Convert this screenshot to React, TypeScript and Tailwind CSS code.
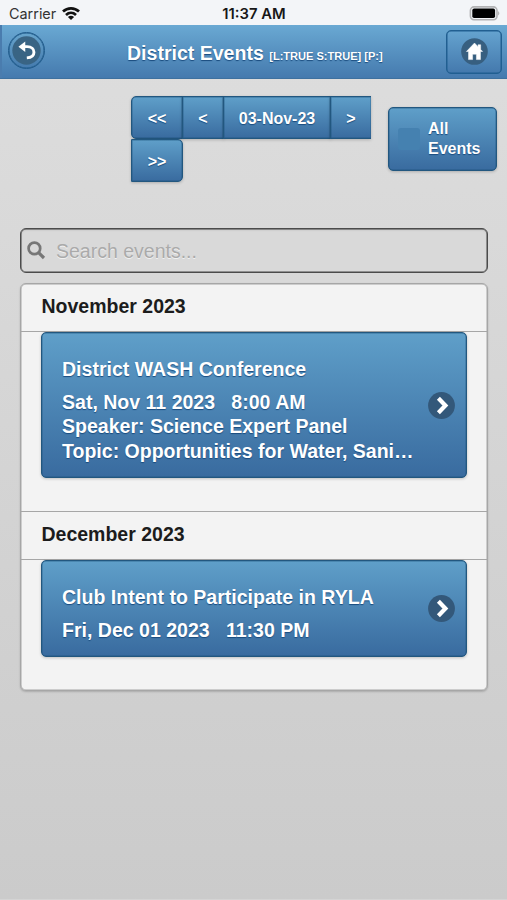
import type { ReactNode } from 'react';

const blue =
  'border border-[#22577f] bg-linear-to-b from-[#5f9fc9] to-[#396b9f] font-bold text-white [text-shadow:0_1px_1px_#194b7e] shadow-[inset_0_0_0_0.5px_rgba(28,80,122,0.6),0_1px_3px_rgba(0,0,0,0.2)]';

function Chevron() {
  return (
    <svg viewBox="0 0 27 27" className="h-[27px] w-[27px] shrink-0">
      <circle cx="13.5" cy="13.5" r="13.4" fill="#33587a" />
      <path d="M10.4 6.3 L17.4 13.5 L10.4 20.7" fill="none" stroke="#fff" strokeWidth="4.2" />
    </svg>
  );
}

function NavButton({ children, className }: { children: ReactNode; className: string }) {
  return (
    <button className={`${blue} flex h-[43px] items-center justify-center pt-[2px] text-[16px] ${className}`}>
      {children}
    </button>
  );
}

function EventCard({ title, lines, className }: { title: string; lines: string[]; className: string }) {
  return (
    <div className={`${blue} mx-[20px] flex items-center rounded-[5px] pr-[11px] pl-[20px] text-[19.55px] ${className}`}>
      <div className="w-[356px] min-w-0 pt-[10px]">
        <h3 className="mb-[9px] leading-[24px] whitespace-nowrap">{title}</h3>
        {lines.map((line) => (
          <p key={line} className="leading-[24.6px] whitespace-pre">{line}</p>
        ))}
      </div>
      <div className="ml-auto flex">
        <Chevron />
      </div>
    </div>
  );
}

function MonthHeading({ children, className }: { children: ReactNode; className: string }) {
  return (
    <h2 className={`flex items-center border-b border-[#a6a6a6] pb-[2px] pl-[20.5px] text-[19.5px] font-bold text-[#1c1c1c] ${className}`}>
      {children}
    </h2>
  );
}

export default function App() {
  return (
    <div className="flex h-[900px] w-[507px] flex-col overflow-hidden border-b border-[#d4d4d4] bg-linear-to-b from-[#dedede] to-[#cbcbcb] font-['Liberation_Sans',Arial,sans-serif]">
      <div className="grid h-[25px] shrink-0 grid-cols-3 items-center bg-[#f3f5f8] pt-[2px] font-[Inter,sans-serif] text-[#171717]">
        <div className="flex items-center gap-[6px] pl-[9px]">
          <span className="text-[14.4px] text-[#333]">Carrier</span>
          <svg viewBox="0 0 18 13" className="h-[13px] w-[18px]">
            <g fill="none" stroke="#111" strokeWidth="2.7">
              <path d="M1 4.6 C5.5 0.3 12.5 0.3 17 4.6" />
              <path d="M4 8 C7 5.2 11 5.2 14 8" />
            </g>
            <path d="M5.9 10 Q9 7.6 12.1 10 L9 13 Z" fill="#111" />
          </svg>
        </div>
        <span className="pt-px pl-px text-center text-[14.8px] font-semibold whitespace-nowrap">11:37 AM</span>
        <svg viewBox="0 0 32 15" className="mr-[6px] h-[15px] w-[32px] justify-self-end">
          <rect x="1.4" y="0.9" width="26.6" height="12.8" rx="3.6" fill="#f3f5f8" stroke="#b2b2b4" strokeWidth="1.6" />
          <rect x="3.3" y="2.6" width="22.8" height="9.4" rx="1.8" fill="#000" />
          <path d="M29.2 5 Q31.4 7.3 29.2 9.6 Z" fill="#aaa" />
        </svg>
      </div>

      <header className="flex h-[54px] shrink-0 items-center border-b border-[#3e719f] bg-linear-to-b from-[#6aa9d3] to-[#457aae] pr-[5px] text-white shadow-[inset_2px_0_0_#4a7cae]">
        <button className="-mt-[3px] ml-[8px] flex h-[37px] w-[37px] items-center justify-center rounded-full border border-[#215c8c] bg-linear-to-b from-[#68a5cd] to-[#457bae] shadow-[inset_0_0_0_0.5px_#215c8c]">
          <svg viewBox="0 0 28 28" className="h-[29px] w-[29px]">
            <circle cx="14" cy="14" r="13.7" fill="#396484" />
            <path d="M10.5 10.3 H14.5 C19 10.3 21.2 13 21.2 15.6 C21.2 18.7 18.5 20.8 14.3 21.1" fill="none" stroke="#fff" strokeWidth="2.8" />
            <path d="M12.8 5.3 V15.4 L6.2 10.4 Z" fill="#fff" />
          </svg>
        </button>
        <h1 className="mt-[4px] ml-[82px] text-[19.55px] font-bold whitespace-nowrap [text-shadow:0_1px_1px_#194b7e]">
          District Events <span className="text-[11.05px]">[L:TRUE S:TRUE] [P:]</span>
        </h1>
        <button className="ml-auto flex h-[44px] w-[56px] items-center justify-center rounded-[5px] border border-[#215f91] bg-linear-to-b from-[#65a3cf] to-[#4479ad] shadow-[inset_0_0_0_0.5px_#215f91]">
          <svg viewBox="0 0 28 28" className="h-[27px] w-[27px]">
            <circle cx="14" cy="14" r="13.8" fill="#375f80" />
            <path d="M14 5.2 L5.6 14 H7.8 V22.4 H12 V16.8 H16 V22.4 H20.2 V14 H22.4 L20.4 11.8 V7 H17.7 V9 Z" fill="#fff" stroke="#fff" strokeWidth="0.5" />
          </svg>
        </button>
      </header>

      <div className="flex h-[149px] shrink-0 pl-[131px]">
        <div className="mt-[17px] flex w-[240px] flex-wrap content-start">
          <NavButton className="w-[52px] rounded-l-[5px]">&lt;&lt;</NavButton>
          <NavButton className="-ml-px w-[42px]">&lt;</NavButton>
          <NavButton className="-ml-px w-[108px]">03-Nov-23</NavButton>
          <NavButton className="-ml-px w-[41px] border-r-0">&gt;</NavButton>
          <NavButton className="w-[52px] rounded-r-[5px]">&gt;&gt;</NavButton>
        </div>
        <label className={`${blue} mt-[28px] ml-[17px] flex h-[64px] w-[109px] items-center rounded-[5px] pl-[9px] text-[16px] leading-[20px]`}>
          <span className="mr-[8px] h-[22px] w-[22px] shrink-0 rounded-[3px] bg-[#4581b0]" />
          <span>All<br />Events</span>
        </label>
      </div>

      <div className="mr-[19px] ml-[20px] flex h-[45px] shrink-0 items-center rounded-[6px] border border-[#4b4b4b] bg-[#d9d9d9] pl-[6px] shadow-[inset_0_0_0_0.5px_#4b4b4b,inset_0_1px_2px_rgba(0,0,0,0.15)]">
        <svg viewBox="0 0 19 19" className="h-[19px] w-[19px]" fill="none" stroke="#777">
          <circle cx="7.4" cy="7.4" r="5.8" strokeWidth="2.7" />
          <path d="M11.6 11.6 L17 17" strokeWidth="3.2" />
        </svg>
        <input
          placeholder="Search events..."
          className="mt-[2px] ml-[10px] w-[400px] bg-transparent text-[19.5px] text-[#333] outline-none [text-shadow:0_1px_0_#f1f1f1] placeholder:text-[#aaa]"
        />
      </div>

      <div className="mt-[10px] mr-[19px] ml-[20px] h-[408px] shrink-0 rounded-[6px] border border-[#a6a6a6] bg-[#f3f3f3] shadow-[inset_0_0_0_0.5px_#a6a6a6,0_1px_2px_rgba(0,0,0,0.18)]">
        <MonthHeading className="h-[48px]">November 2023</MonthHeading>
        <EventCard
          className="h-[146px]"
          title="District WASH Conference"
          lines={['Sat, Nov 11 2023   8:00 AM', 'Speaker: Science Expert Panel', 'Topic: Opportunities for Water, Sani…']}
        />
        <MonthHeading className="mt-[33px] h-[49px] border-t">December 2023</MonthHeading>
        <EventCard
          className="h-[97px]"
          title="Club Intent to Participate in RYLA"
          lines={['Fri, Dec 01 2023   11:30 PM']}
        />
      </div>
    </div>
  );
}
